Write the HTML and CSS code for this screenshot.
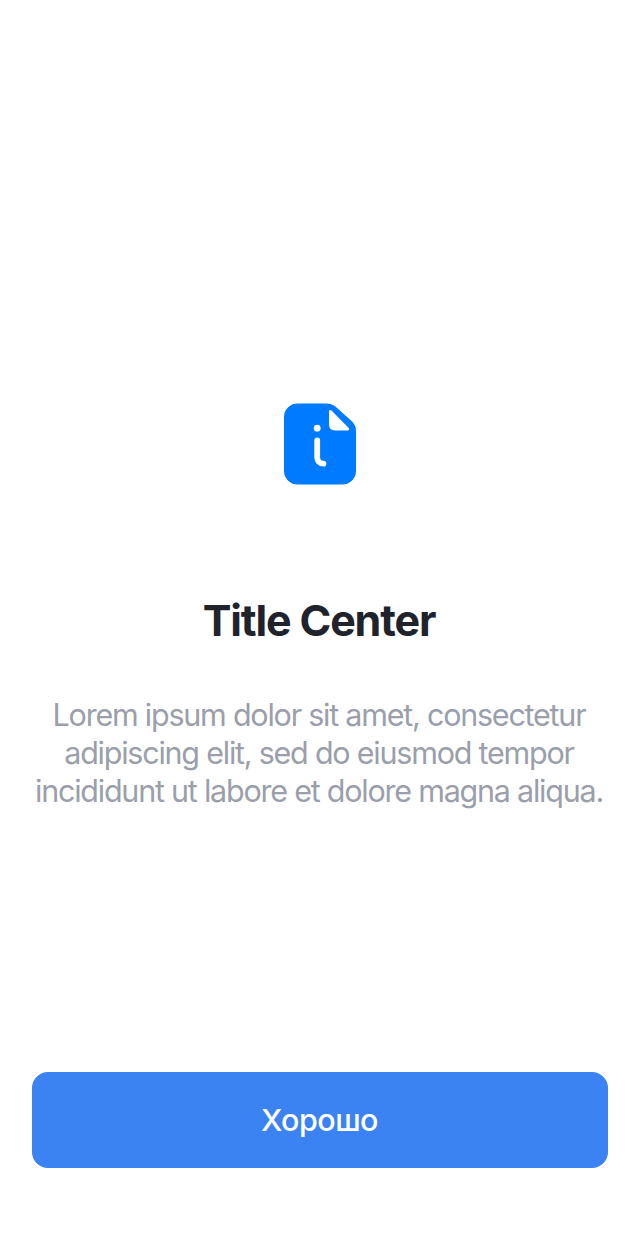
FILE: index.html
```html
<!DOCTYPE html>
<html lang="ru">
<head>
<meta charset="utf-8">
<title>Title Center</title>
<link rel="stylesheet" href="styles.css">
</head>
<body>
<main class="screen">
  <svg class="icon" viewBox="0 0 72 82" aria-hidden="true">
    <path class="icon-sheet" d="M13.500 .5H42.500Q48 .5 52 4L67.500 18Q72 22 72 28V68a13.500 13.500 0 0 1-13.500 13.500H13.500A13.500 13.500 0 0 1 0 68V14A13.500 13.500 0 0 1 13.500 .5Z"/>
    <path class="icon-fold" d="M45 8.500C45 6.700 46.400 6.500 47.500 7.600L64.500 24.700C65.900 26.100 65.200 27.400 63.500 27.400H51Q45 27.400 45 21.500Z"/>
    <circle class="icon-fold" cx="33.200" cy="25.200" r="3.400"/>
    <path class="icon-stem" d="M33.200 37.400V54C33.200 58 35.500 60.700 39.400 60.700"/>
  </svg>
  <h1 class="title">Title Center</h1>
  <p class="text">Lorem ipsum dolor sit amet, consectetur<br>adipiscing elit, sed do eiusmod tempor<br>incididunt ut labore et dolore magna aliqua.</p>
  <button class="button" type="button">Хорошо</button>
</main>
</body>
</html>
```
FILE: styles.css
```css
body { margin: 0; background: #fff; font-family: Inter, "Liberation Sans", sans-serif; }
.screen { box-sizing: border-box; height: 1240px; padding: 403px 32px 72px; display: flex; flex-direction: column; align-items: center; }
.icon { width: 72px; height: 82px; flex: none; }
.icon-sheet { fill: #007aff; }
.icon-fold { fill: #fff; }
.icon-stem { fill: none; stroke: #fff; stroke-width: 5.800; stroke-linecap: round; }
.title { margin: 109px 0 0; padding-right: 2px; font-size: 43px; line-height: 52px; font-weight: 700; letter-spacing: -1.150px; color: #20232c; }
.text { margin: 50px 0 0; padding-right: 2px; font-size: 30.500px; line-height: 38px; letter-spacing: -1.230px; color: #9a9fab; text-align: center; white-space: nowrap; }
.button { width: 100%; height: 96px; margin-top: auto; padding: 0 1px 0 0; border: 0; border-radius: 16px; background: #3b82f2; color: #fff; font: 500 30.500px/38px Inter, "Liberation Sans", sans-serif; letter-spacing: -.5px; }
```
